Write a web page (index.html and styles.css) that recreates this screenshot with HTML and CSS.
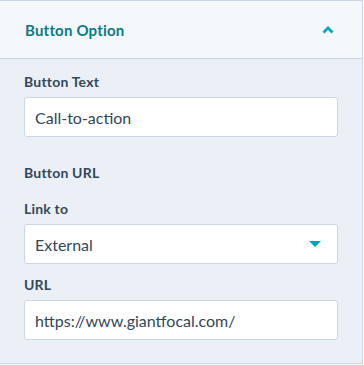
FILE: index.html
```html
<!DOCTYPE html>
<html>
<head>
<meta charset="utf-8">
<link rel="stylesheet" href="styles.css">
</head>
<body>
<div class="panel">
  <div class="header">
    <span class="title">Button Option</span>
    <svg class="chev" width="12" height="8" viewBox="0 0 12 8"><path d="M1.5 6.5 L6 2 L10.5 6.5" fill="none" stroke="#00a4bd" stroke-width="2.8" stroke-linecap="butt"/></svg>
  </div>
  <div class="body">
    <div class="label">Button Text</div>
    <div class="field">Call-to-action</div>
    <div class="label section">Button URL</div>
    <div class="label sub">Link to</div>
    <div class="field select">
      <span>External</span>
      <svg width="12" height="6" viewBox="0 0 12 6"><path d="M0 0 H12 L6 6 Z" fill="#00a4bd"/></svg>
    </div>
    <div class="label after">URL</div>
    <div class="field">https://www.giantfocal.com/</div>
  </div>
</div>
</body>
</html>
```
FILE: styles.css
```css
html, body {
  margin: 0;
  padding: 0;
  background: #ffffff;
}
body {
  font-family: "Lato", "Noto Sans", sans-serif;
  color: #33475b;
}
.panel {
  width: 362px;
  border-top: 1px solid #cbd6e2;
  border-right: 1px solid #cbd6e2;
  border-bottom: 1px solid #cbd6e2;
  background: #eaf0f6;
}
.header {
  height: 58px;
  box-sizing: border-box;
  background: #f5f8fa;
  border-bottom: 1px solid #cbd6e2;
  display: flex;
  align-items: center;
  justify-content: space-between;
  padding: 0 28px 0 25px;
}
.title {
  font-size: 15px;
  font-weight: 700;
  color: #0b7a8c;
  letter-spacing: 0.2px;
}
.chev {
  display: block;
}
.body {
  padding: 13px 24px 23px 24px;
  display: flex;
  flex-direction: column;
}
.label {
  font-size: 14px;
  font-weight: 700;
  color: #33475b;
  line-height: 20px;
  margin-bottom: 5px;
  letter-spacing: 0.2px;
}
.label.section {
  margin-top: 26px;
  margin-bottom: 0;
}
.label.sub {
  margin-top: 16px;
}
.label.after {
  margin-top: 11px;
}
.field {
  height: 40px;
  box-sizing: border-box;
  background: #ffffff;
  border: 1px solid #cbd6e2;
  border-radius: 3px;
  padding: 0 10px;
  display: flex;
  align-items: center;
  font-size: 16px;
  color: #33475b;
}
.select {
  justify-content: space-between;
  padding-right: 16px;
}
.select svg {
  display: block;
}
```
